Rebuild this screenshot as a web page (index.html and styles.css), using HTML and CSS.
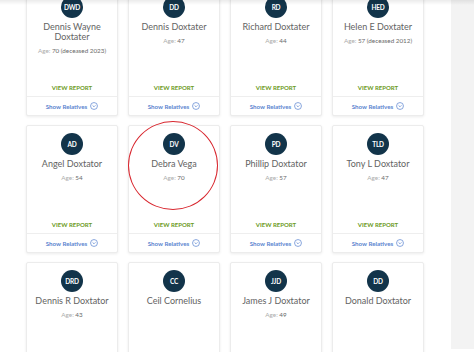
FILE: index.html
```html
<!DOCTYPE html>
<html lang="en">
<head>
    <meta charset="UTF-8">
    <title>Relatives</title>
    <link rel="stylesheet" href="styles.css">
</head>
<body>
<div class="page">
    <div class="results">
        <div class="grid">
            <div class="card">
                <div class="avatar">DWD</div>
                <div class="name">Dennis Wayne Doxtater</div>
                <div class="age"><span>Age:</span> 70 (deceased 2023)</div>
                <a class="report">VIEW REPORT</a>
                <div class="relatives">Show Relatives <span class="chev"><svg viewBox="0 0 10 10"><circle cx="5" cy="5" r="4.3"/><path d="M3.2 4.2 5 6 6.8 4.2"/></svg></span></div>
            </div>
            <div class="card">
                <div class="avatar">DD</div>
                <div class="name">Dennis Doxtater</div>
                <div class="age"><span>Age:</span> 47</div>
                <a class="report">VIEW REPORT</a>
                <div class="relatives">Show Relatives <span class="chev"><svg viewBox="0 0 10 10"><circle cx="5" cy="5" r="4.3"/><path d="M3.2 4.2 5 6 6.8 4.2"/></svg></span></div>
            </div>
            <div class="card">
                <div class="avatar">RD</div>
                <div class="name">Richard Doxtater</div>
                <div class="age"><span>Age:</span> 44</div>
                <a class="report">VIEW REPORT</a>
                <div class="relatives">Show Relatives <span class="chev"><svg viewBox="0 0 10 10"><circle cx="5" cy="5" r="4.3"/><path d="M3.2 4.2 5 6 6.8 4.2"/></svg></span></div>
            </div>
            <div class="card">
                <div class="avatar">HED</div>
                <div class="name">Helen E Doxtater</div>
                <div class="age"><span>Age:</span> 57 (deceased 2012)</div>
                <a class="report">VIEW REPORT</a>
                <div class="relatives">Show Relatives <span class="chev"><svg viewBox="0 0 10 10"><circle cx="5" cy="5" r="4.3"/><path d="M3.2 4.2 5 6 6.8 4.2"/></svg></span></div>
            </div>

            <div class="card">
                <div class="avatar">AD</div>
                <div class="name">Angel Doxtator</div>
                <div class="age"><span>Age:</span> 54</div>
                <a class="report">VIEW REPORT</a>
                <div class="relatives">Show Relatives <span class="chev"><svg viewBox="0 0 10 10"><circle cx="5" cy="5" r="4.3"/><path d="M3.2 4.2 5 6 6.8 4.2"/></svg></span></div>
            </div>
            <div class="card">
                <div class="avatar">DV</div>
                <div class="name">Debra Vega</div>
                <div class="age"><span>Age:</span> 70</div>
                <a class="report">VIEW REPORT</a>
                <div class="relatives">Show Relatives <span class="chev"><svg viewBox="0 0 10 10"><circle cx="5" cy="5" r="4.3"/><path d="M3.2 4.2 5 6 6.8 4.2"/></svg></span></div>
                <div class="marker"></div>
            </div>
            <div class="card">
                <div class="avatar">PD</div>
                <div class="name">Phillip Doxtator</div>
                <div class="age"><span>Age:</span> 57</div>
                <a class="report">VIEW REPORT</a>
                <div class="relatives">Show Relatives <span class="chev"><svg viewBox="0 0 10 10"><circle cx="5" cy="5" r="4.3"/><path d="M3.2 4.2 5 6 6.8 4.2"/></svg></span></div>
            </div>
            <div class="card">
                <div class="avatar">TLD</div>
                <div class="name">Tony L Doxtator</div>
                <div class="age"><span>Age:</span> 47</div>
                <a class="report">VIEW REPORT</a>
                <div class="relatives">Show Relatives <span class="chev"><svg viewBox="0 0 10 10"><circle cx="5" cy="5" r="4.3"/><path d="M3.2 4.2 5 6 6.8 4.2"/></svg></span></div>
            </div>

            <div class="card">
                <div class="avatar">DRD</div>
                <div class="name">Dennis R Doxtator</div>
                <div class="age"><span>Age:</span> 43</div>
            </div>
            <div class="card">
                <div class="avatar">CC</div>
                <div class="name">Ceil Cornelius</div>
            </div>
            <div class="card">
                <div class="avatar">JJD</div>
                <div class="name">James J Doxtator</div>
                <div class="age"><span>Age:</span> 49</div>
            </div>
            <div class="card">
                <div class="avatar">DD</div>
                <div class="name">Donald Doxtator</div>
            </div>
        </div>
    </div>
    <div class="side"></div>
    <div class="top-shadow"></div>
</div>
</body>
</html>
```

FILE: styles.css
```css
body {
    margin: 0;
    font-family: Lato, "Open Sans", sans-serif;
    background-color: #fff;
}
.page {
    position: relative;
    display: flex;
    width: 474px;
    height: 352px;
    overflow: hidden;
}
.results {
    flex: 1;
    padding-left: 26px;
}
.grid {
    display: grid;
    grid-template-columns: repeat(4, 92px);
    grid-auto-rows: 128px;
    column-gap: 10px;
    row-gap: 9px;
    margin-top: -12px;
}
.card {
    position: relative;
    display: flex;
    flex-direction: column;
    align-items: center;
    background-color: #fff;
    border: 1px solid #ececec;
    border-radius: 2px;
    box-shadow: 0 1px 3px rgba(0, 0, 0, 0.08);
    box-sizing: border-box;
}
.avatar {
    width: 22px;
    height: 22px;
    margin-top: 7px;
    border-radius: 50%;
    background-color: #12344a;
    color: #fff;
    font-size: 6.5px;
    font-weight: 700;
    display: flex;
    align-items: center;
    justify-content: center;
    letter-spacing: -0.2px;
}
.name {
    margin-top: 4px;
    padding: 0 6px;
    font-size: 9px;
    line-height: 10px;
    color: #636363;
    text-align: center;
}
.age {
    margin-top: 5px;
    font-size: 6.3px;
    color: #6a6a6a;
}
.age span {
    color: #ababab;
}
.report {
    margin-top: auto;
    font-size: 6px;
    font-weight: 700;
    color: #6b9a23;
    line-height: 10px;
    margin-bottom: 3px;
}
.relatives {
    align-self: stretch;
    height: 18px;
    border-top: 1px solid #eee;
    display: flex;
    align-items: center;
    justify-content: center;
    gap: 3px;
    font-size: 6.2px;
    font-weight: 700;
    color: #5b85cf;
}
.chev svg {
    display: block;
    width: 8px;
    height: 8px;
    fill: none;
    stroke: #5b85cf;
    stroke-width: 0.9;
}
.marker {
    position: absolute;
    left: -1px;
    top: -5px;
    width: 88px;
    height: 87px;
    border: 1.5px solid #d8262e;
    border-radius: 50%;
}
.side {
    width: 23px;
    height: 349px;
    background-color: #f3f3f3;
}
.top-shadow {
    position: absolute;
    left: 0;
    top: 0;
    width: 100%;
    height: 5px;
    background: linear-gradient(rgba(0, 0, 0, 0.08), rgba(0, 0, 0, 0));
    pointer-events: none;
}
```
